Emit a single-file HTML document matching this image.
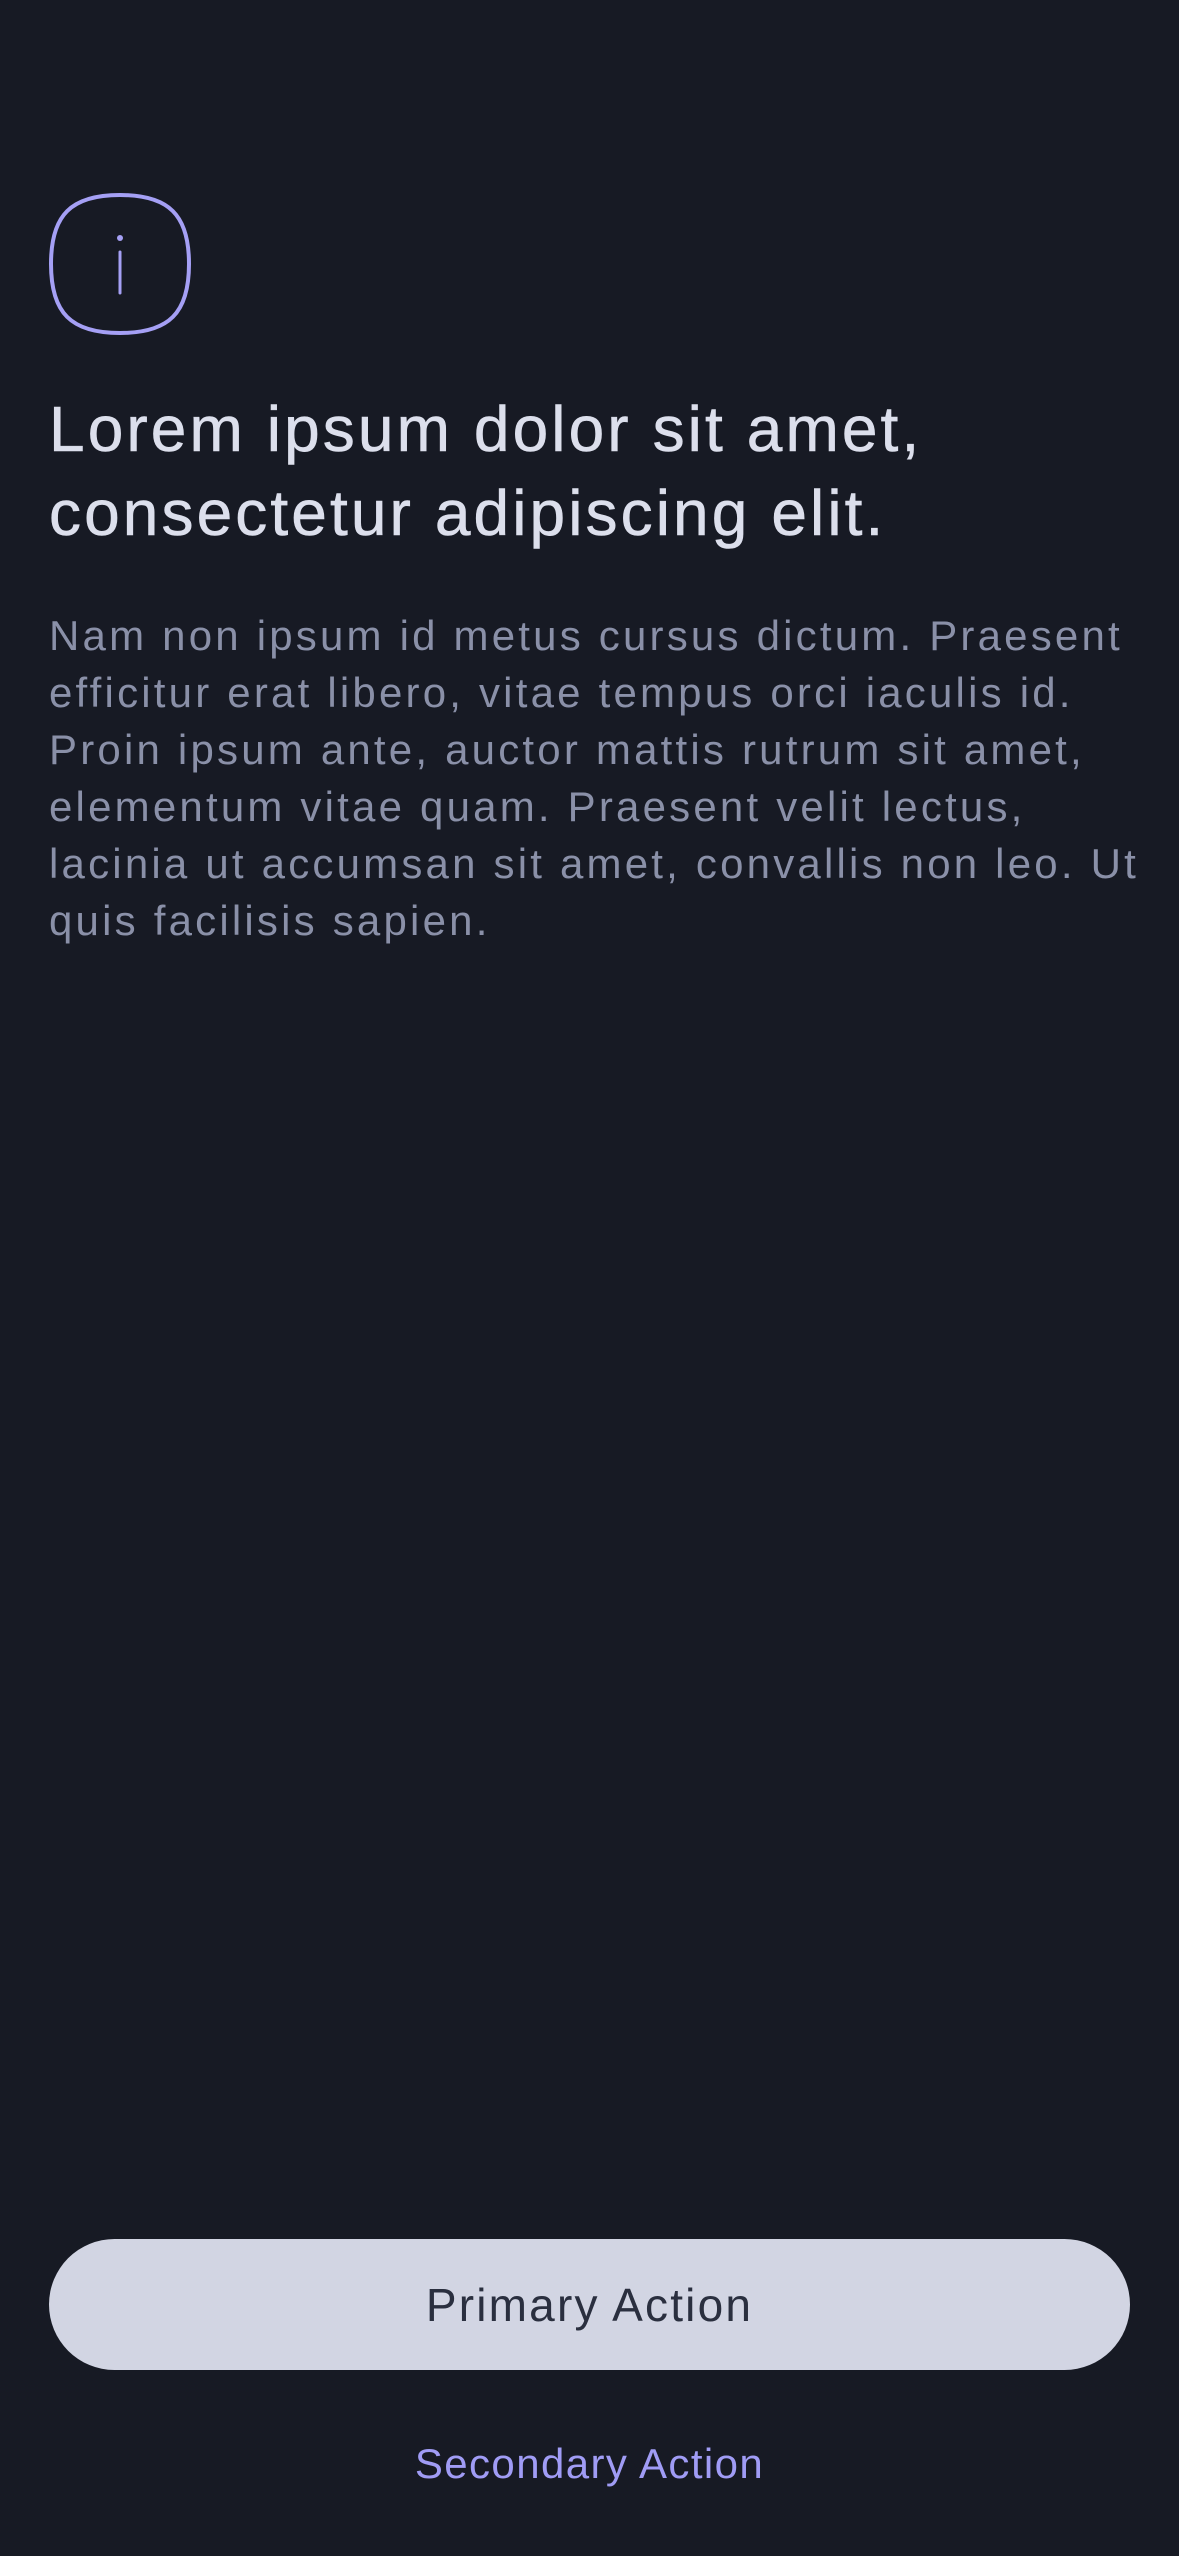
<!DOCTYPE html>
<html><head><meta charset="utf-8"><style>
html,body{margin:0;padding:0;}
body{width:1179px;height:2556px;background:#171a24;position:relative;overflow:hidden;font-family:"Liberation Sans",sans-serif;}
.icon{position:absolute;left:49px;top:193px;width:142px;height:142px;}
h1{position:absolute;left:49px;top:387px;margin:0;font-weight:normal;font-size:64px;line-height:84px;color:#dcdfec;white-space:nowrap;letter-spacing:3.1px;-webkit-text-stroke:0.6px #dcdfec;}
p{position:absolute;left:49px;top:607px;margin:0;font-size:42px;line-height:57px;color:#8a90a8;white-space:nowrap;letter-spacing:3.2px;}
.btn{position:absolute;left:49px;top:2239px;width:1081px;height:131px;border-radius:66px;background:#d2d5e3;color:#2a2f3f;font-size:46px;display:flex;align-items:center;justify-content:center;letter-spacing:2.2px;}
.sec{position:absolute;left:0;width:1179px;top:2434px;height:60px;line-height:60px;text-align:center;color:#a09cf5;font-size:42px;letter-spacing:1.4px;}
</style></head><body>
<svg class="icon" viewBox="0 0 142 142"><path d="M71 2 C120 2 140 22 140 71 C140 120 120 140 71 140 C22 140 2 120 2 71 C2 22 22 2 71 2 Z" fill="none" stroke="#a5a0f5" stroke-width="4"/><circle cx="71" cy="45" r="3" fill="#a5a0f5"/><line x1="71" y1="59" x2="71" y2="100" stroke="#a5a0f5" stroke-width="3" stroke-linecap="round"/></svg>
<h1>Lorem ipsum dolor sit amet,<br>consectetur adipiscing elit.</h1>
<p>Nam non ipsum id metus cursus dictum. Praesent<br>efficitur erat libero, vitae tempus orci iaculis id.<br>Proin ipsum ante, auctor mattis rutrum sit amet,<br>elementum vitae quam. Praesent velit lectus,<br>lacinia ut accumsan sit amet, convallis non leo. Ut<br>quis facilisis sapien.</p>
<div class="btn">Primary Action</div>
<div class="sec">Secondary Action</div>
</body></html>
